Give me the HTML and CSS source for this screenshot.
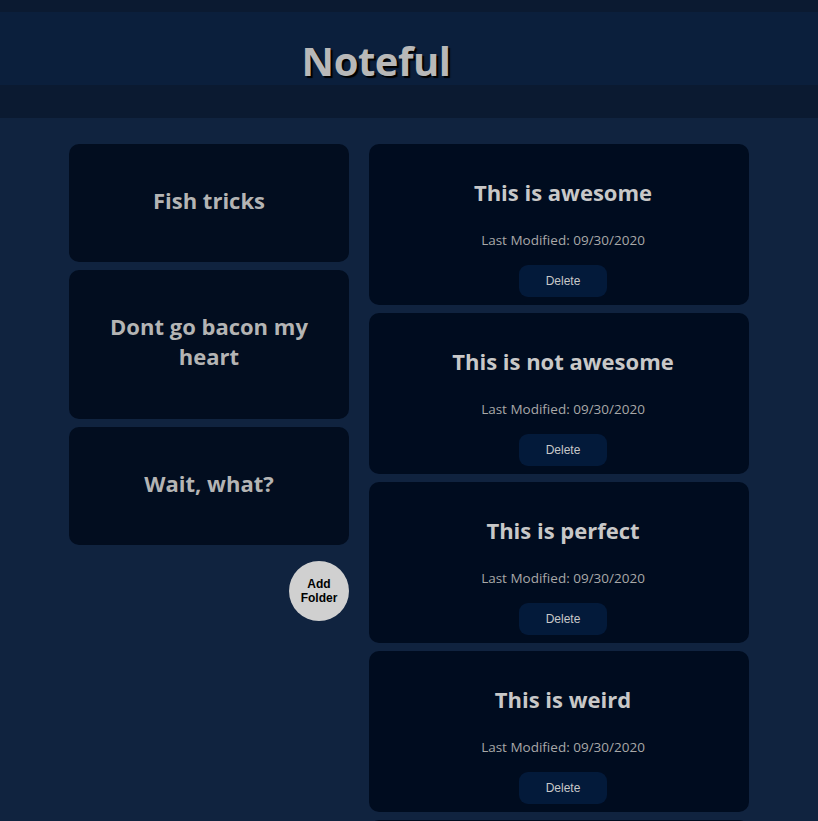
FILE: index.html
```html
<!DOCTYPE html>
<html>
<head>
<meta charset="utf-8">
<link rel="stylesheet" href="styles.css">
</head>
<body>
<header class="app-header">
  <div class="header-inner">
    <h1 class="logo">Noteful</h1>
  </div>
</header>
<main class="layout">
  <nav class="sidebar">
    <div class="folder"><h2>Fish tricks</h2></div>
    <div class="folder"><h2>Dont go bacon my heart</h2></div>
    <div class="folder"><h2>Wait, what?</h2></div>
    <button class="add-folder">Add<br>Folder</button>
  </nav>
  <section class="notes">
    <div class="note">
      <h2>This is awesome</h2>
      <p class="modified">Last Modified: 09/30/2020</p>
      <button class="delete">Delete</button>
    </div>
    <div class="note">
      <h2>This is not awesome</h2>
      <p class="modified">Last Modified: 09/30/2020</p>
      <button class="delete">Delete</button>
    </div>
    <div class="note">
      <h2>This is perfect</h2>
      <p class="modified">Last Modified: 09/30/2020</p>
      <button class="delete">Delete</button>
    </div>
    <div class="note">
      <h2>This is weird</h2>
      <p class="modified">Last Modified: 09/30/2020</p>
      <button class="delete">Delete</button>
    </div>
    <div class="note">
      <h2>Ok</h2>
      <p class="modified">Last Modified: 09/30/2020</p>
      <button class="delete">Delete</button>
    </div>
  </section>
</main>
</body>
</html>
```
FILE: styles.css
```css
* { box-sizing: border-box; }
html, body {
  margin: 0;
  padding: 0;
  background: #10233f;
  font-family: "Open Sans", "Noto Sans", sans-serif;
}
.app-header {
  background: #0b1a31;
  padding: 12px 0 33px;
}
.header-inner {
  background: #0b1f3c;
  height: 73px;
  display: flex;
  align-items: flex-start;
  justify-content: center;
  padding: 22px 66px 0 0;
}
.logo {
  margin: 0;
  font-size: 40px;
  line-height: 54px;
  font-weight: 700;
  color: #b8b8b8;
  text-shadow: 2px 2px 1px #000;
  letter-spacing: -0.5px;
}
.layout {
  display: flex;
  gap: 20px;
  padding: 26px 0 0 69px;
  align-items: flex-start;
}
.sidebar {
  width: 280px;
  display: flex;
  flex-direction: column;
  gap: 8px;
}
.folder {
  background: #020d1f;
  border-radius: 10px;
  display: flex;
  align-items: center;
  justify-content: center;
  padding: 41px 30px 47px;
}
.folder:nth-child(2) {
  padding-bottom: 48px;
}
.folder h2 {
  margin: 0;
  font-size: 22px;
  line-height: 30px;
  font-weight: 700;
  color: #b4b4b4;
  text-align: center;
}
.add-folder {
  align-self: flex-end;
  margin-top: 8px;
  width: 60px;
  height: 60px;
  border-radius: 50%;
  border: none;
  background: #d0d0d0;
  color: #000;
  font-family: "Liberation Sans", Arial, sans-serif;
  font-size: 12px;
  font-weight: 700;
  line-height: 14px;
  padding: 0;
}
.notes {
  width: 380px;
  display: flex;
  flex-direction: column;
  gap: 8px;
}
.note {
  background: #000c1f;
  border-radius: 10px;
  height: 161px;
  padding: 34px 0 0 8px;
  display: flex;
  flex-direction: column;
  align-items: center;
}
.note h2 {
  margin: 0;
  font-size: 22px;
  line-height: 29px;
  font-weight: 700;
  color: #c8c8c8;
}
.modified {
  margin: 24px 0 0;
  font-size: 13.5px;
  line-height: 19px;
  color: #a8a8a8;
}
.delete {
  margin-top: 15px;
  width: 88px;
  height: 32px;
  border: none;
  border-radius: 9px;
  background: #031a3a;
  color: #c8c8c8;
  font-family: "Liberation Sans", Arial, sans-serif;
  font-size: 12px;
}
```
